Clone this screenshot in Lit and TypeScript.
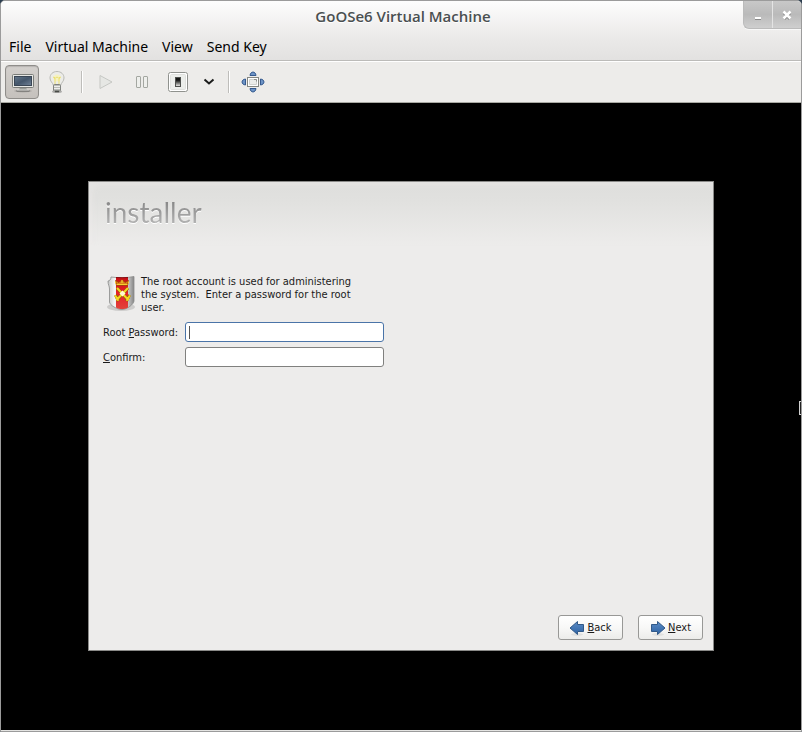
import { LitElement, html, css, svg } from "lit";
import { customElement } from "lit/decorators.js";

const monitorIcon = svg`
  <svg viewBox="0 0 26 22" width="26" height="22" aria-hidden="true">
    <defs>
      <linearGradient id="screen" x1="0" y1="0" x2="1" y2="1">
        <stop offset="0" stop-color="#64778b" /><stop offset=".5" stop-color="#44566b" /><stop offset="1" stop-color="#718397" />
      </linearGradient>
    </defs>
    <ellipse cx="13" cy="20" rx="9" ry="1.500" fill="#0002" />
    <path d="M10 16h6l1 3h-8z" fill="#999b97" />
    <path d="M6.500 20h13" stroke="#5b5d59" />
    <path d="M7 19h12" stroke="#d5d6d3" />
    <rect x="2.500" y="3.500" width="21" height="13" rx="1" fill="#e6e7e4" stroke="#7b7d79" />
    <rect x="4.500" y="5.500" width="17" height="9" fill="url(#screen)" stroke="#3a4655" />
  </svg>`;

const bulbIcon = svg`
  <svg viewBox="0 0 22 24" width="22" height="24" aria-hidden="true">
    <ellipse cx="11" cy="21.500" rx="5" ry="1.600" fill="#0004" />
    <path d="M11 1.500c-4.200 0-7 2.800-7 6.500 0 3.200 2.600 4.500 3.400 7.500h7.200c.8-3 3.400-4.300 3.400-7.500 0-3.700-2.800-6.500-7-6.500z" fill="#ecece8" stroke="#b9bab5" />
    <circle cx="11" cy="8" r="3.500" fill="#f9f4b5" opacity=".8" />
    <path d="M9 14V9l-1.500-2 2 1L11 7l1.500 1 2-1L13 9v5" fill="none" stroke="#eadf72" />
    <rect x="7.500" y="14.500" width="7" height="6.500" rx="1" fill="#babcb8" stroke="#81837f" />
    <path d="M8 16.500h6M8 18.500h6" stroke="#eeeeec" />
    <path d="M9 21.500h4" stroke="#484a46" stroke-width="1.500" />
  </svg>`;

const playIcon = svg`
  <svg viewBox="0 0 16 16" width="16" height="16" aria-hidden="true">
    <path d="M2 1.500L14 8 2 14.500z" fill="#e6e7e4" stroke="#c5c7c3" stroke-linejoin="round" />
  </svg>`;

const pauseIcon = svg`
  <svg viewBox="0 0 16 16" width="16" height="16" aria-hidden="true">
    <g fill="#eeefec" stroke="#a4a7a1">
      <rect x="2.500" y="2.500" width="4" height="11" rx=".5" />
      <rect x="9.500" y="2.500" width="4" height="11" rx=".5" />
    </g>
  </svg>`;

const powerIcon = svg`
  <svg viewBox="0 0 22 22" width="22" height="22" aria-hidden="true">
    <defs>
      <linearGradient id="rocker" x1="0" y1="0" x2="0" y2="1">
        <stop offset=".3" stop-color="#151615" /><stop offset=".5" stop-color="#4e504d" /><stop offset="1" stop-color="#f4f4f2" />
      </linearGradient>
    </defs>
    <rect x="1.500" y="1.500" width="19" height="19" rx="2" fill="#fff" stroke="#90928e" />
    <rect x="3.500" y="3.500" width="15" height="15" rx="1" fill="#eceeeb" stroke="#e0e1de" />
    <rect x="8.500" y="6.500" width="5" height="9" fill="url(#rocker)" stroke="#4e504d" />
  </svg>`;

const chevronIcon = svg`
  <svg viewBox="0 0 12 8" width="12" height="8" aria-hidden="true">
    <path d="M1.500 1.500L6 5.500l4.500-4" fill="none" stroke="#1c1d1c" stroke-width="2" />
  </svg>`;

const fullscreenIcon = svg`
  <svg viewBox="0 0 24 22" width="24" height="22" aria-hidden="true">
    <g fill="#6e94c6" stroke="#34598e">
      <path d="M9 4.500c.5-4.600 5.500-4.600 6 0z" />
      <path d="M9 17.500c.5 4.600 5.500 4.600 6 0z" />
      <path d="M4.500 8c-4.600.5-4.600 5.500 0 6z" />
      <path d="M19.500 8c4.600.5 4.600 5.500 0 6z" />
    </g>
    <rect x="6.500" y="6.500" width="11" height="9" fill="#fff" stroke="#858782" />
    <path d="M8.500 13.500v-5h7v5z" fill="#ecedea" stroke="#d2d3cf" />
    <path d="M13 8.500h2.500v2" fill="none" stroke="#8f918c" />
  </svg>`;

const shieldIcon = svg`
  <svg viewBox="0 0 36 44" width="36" height="44" aria-hidden="true">
    <defs>
      <linearGradient id="steel" x1="0" y1="0" x2="1" y2="0">
        <stop offset="0" stop-color="#c5c6c5" /><stop offset=".25" stop-color="#f4f4f4" />
        <stop offset=".75" stop-color="#d0d0d0" /><stop offset="1" stop-color="#858585" />
      </linearGradient>
      <linearGradient id="band" x1="0" y1="0" x2="0" y2="1">
        <stop offset="0" stop-color="#c80f16" /><stop offset=".5" stop-color="#e81f27" /><stop offset="1" stop-color="#e0433b" />
      </linearGradient>
    </defs>
    <ellipse cx="18" cy="35" rx="14" ry="4" fill="#0002" />
    <path d="M8 5c7 1 16 1 23-.5V29c0 3-7 8.500-12 8.500S6.500 33 6.500 30V17c0-3-1.500-4-1.500-8 1.500 0 3-1.500 3-4z" fill="url(#steel)" stroke="#8a8b8a" stroke-width=".8" />
    <path d="M13 5.500c4 .3 8 .3 12 0v30c-3.500 2-8.500 2-12 0z" fill="url(#band)" />
    <path d="M13 5.500c4 .3 8 .3 12 0" stroke="#860b0f" fill="none" />
    <g stroke="#8a6410" stroke-width="3" fill="none">
      <path d="M14 16l11 12M25 16L14 28M12.500 23l3 6M26.500 23l-3 6" />
    </g>
    <g stroke="#f6d61f" stroke-width="2" fill="none" stroke-linecap="round">
      <path d="M14.500 16.500l10.500 11M24.500 16.500L14 27.500M12.500 24l2.500 4M26.500 24L24 28" />
    </g>
    <path d="M19.500 18.500l3 3-3 3-3-3z" fill="#fffad0" />
    <path d="M12.500 8.500l1 5h11l1-5-3.500 2-3-3-3 3z" fill="#d9861a" stroke="#9e3a08" stroke-width=".8" />
    <path d="M13.500 12.500h11M19 8v3M12.500 9.500v2M25.500 9.500v2" stroke="#f7cf30" />
  </svg>`;

const arrowIcon = svg`
  <svg class="arrow" viewBox="0 0 16 16" width="16" height="16" aria-hidden="true">
    <defs>
      <linearGradient id="blue" x1="0" y1="0" x2="0" y2="1">
        <stop offset="0" stop-color="#5b8cc6" /><stop offset="1" stop-color="#2d62a3" />
      </linearGradient>
    </defs>
    <ellipse cx="8" cy="14.500" rx="6" ry="1.500" fill="#0001" />
    <path d="M1.500 4.500h6v-3L15 8l-7.500 6.500v-3h-6z" fill="url(#blue)" stroke="#315988" stroke-linejoin="round" />
  </svg>`;

@customElement("title-bar")
class TitleBar extends LitElement {
  static styles = css`
    :host {
      display: grid;
      grid-template-columns: 60px 1fr 60px;
      height: 33px;
    }
    h1 {
      grid-column: 2;
      margin: 0;
      padding-left: 4px;
      text-align: center;
      font-family: "Open Sans", "Noto Sans", sans-serif;
      font-size: 15px;
      line-height: 30px;
      font-weight: 600;
      color: #4a4f50;
      text-shadow: 0 1px #fff;
    }
    .controls {
      display: flex;
      height: 27px;
      width: 57px;
      justify-self: end;
      border: 1px solid #bbb;
      border-width: 0 0 1px 1px;
      border-bottom-left-radius: 6px;
      box-shadow: 0 1px #f8f8f8;
      overflow: hidden;
      background: linear-gradient(#c8c8c8, #bababa 50%, #cfcfcf);
    }
    button {
      flex: 1;
      border: 0;
      padding: 0;
      display: grid;
      place-items: center;
      background: none;
    }
    button + button {
      border-left: 1px solid #e4e4e4;
    }
  `;
  render() {
    return html`
      <h1>GoOSe6 Virtual Machine</h1>
      <div class="controls">
        <button aria-label="Minimize">
          <svg viewBox="0 0 12 12" width="12" height="12"><path d="M3 10h6" stroke="#888" stroke-width="2" /><path d="M3 9h6" stroke="#fff" stroke-width="2" /></svg>
        </button>
        <button aria-label="Close">
          <svg viewBox="0 0 12 12" width="12" height="12"><path d="M3 4l6 6M9 4l-6 6" stroke="#888" stroke-width="3" /><path d="M2.500 2.500l7 7M9.500 2.500l-7 7" stroke="#fff" stroke-width="2.500" /></svg>
        </button>
      </div>
    `;
  }
}

@customElement("menu-bar")
class MenuBar extends LitElement {
  static styles = css`
    nav {
      display: flex;
      gap: 14px;
      padding: 0 8px;
      height: 26px;
      border-bottom: 1px solid #bcbbb9;
    }
    button {
      border: 0;
      padding: 0;
      background: none;
      font: inherit;
      font-size: 14px;
      line-height: 26px;
      color: #000;
    }
  `;
  render() {
    return html`<nav>
      ${["File", "Virtual Machine", "View", "Send Key"].map((m) => html`<button>${m}</button>`)}
    </nav>`;
  }
}

@customElement("tool-bar")
class ToolBar extends LitElement {
  static styles = css`
    :host {
      display: flex;
      align-items: center;
      height: 41px;
      padding: 0 4px;
      background: #edecea;
      border-bottom: 1px solid #a9a9a3;
      box-shadow: inset 0 1px #fff;
    }
    button {
      display: grid;
      place-items: center;
      box-sizing: border-box;
      width: 36px;
      height: 34px;
      border: 0;
      padding: 0;
      background: none;
    }
    .active {
      width: 34px;
      padding-left: 2px;
      border: 1px solid #8f8d8a;
      border-radius: 4px;
      background: linear-gradient(#d3d0cd, #c5c1bd);
      box-shadow: inset 0 1px 1px #0002;
    }
    .menu {
      width: 26px;
    }
    .rule {
      width: 1px;
      height: 22px;
      margin: 0 6px;
      background: #bebdba;
      box-shadow: 1px 0 #fff;
    }
  `;
  render() {
    return html`
      <button class="active" aria-label="Console">${monitorIcon}</button>
      <button aria-label="Details">${bulbIcon}</button>
      <span class="rule"></span>
      <button aria-label="Run" disabled>${playIcon}</button>
      <button aria-label="Pause">${pauseIcon}</button>
      <button aria-label="Shut down">${powerIcon}</button>
      <button class="menu" aria-label="Shut down options">${chevronIcon}</button>
      <span class="rule"></span>
      <button aria-label="Fullscreen">${fullscreenIcon}</button>
    `;
  }
}

@customElement("installer-page")
class InstallerPage extends LitElement {
  static styles = css`
    :host {
      display: flex;
      flex-direction: column;
      box-sizing: border-box;
      border: 1px solid #8a8a88;
      background: #edeceb;
      font-family: "DejaVu Sans Condensed", "DejaVu Sans", sans-serif;
      font-stretch: condensed;
      font-size: 11px;
      color: #1a1a1a;
    }
    header {
      height: 64px;
      padding: 0 16px;
      background: linear-gradient(#dededc, #e1e1df 30%, #edeceb);
      box-shadow: inset 4px 4px 6px #edeceb66;
    }
    h2 {
      margin: 0;
      width: fit-content;
      font-family: Lato, sans-serif;
      font-stretch: normal;
      font-weight: 400;
      font-size: 28px;
      line-height: 60px;
      background: linear-gradient(#8a8a8a 35%, #b4b4b4 70%);
      background-clip: text;
      -webkit-background-clip: text;
      color: transparent;
      filter: drop-shadow(0 1px 0 #fff);
    }
    form {
      flex: 1;
      display: flex;
      flex-direction: column;
      padding: 26px 10px 10px 14px;
    }
    .intro {
      display: flex;
      gap: 2px;
      margin-bottom: 6px;
    }
    .intro p {
      margin: 3px 0 0;
      width: 240px;
      line-height: 13px;
      white-space: pre-line;
    }
    .fields {
      display: grid;
      grid-template-columns: 77px 199px;
      gap: 5px;
      align-items: center;
    }
    .fields label {
      white-space: nowrap;
    }
    .fields input {
      box-sizing: border-box;
      width: 100%;
      height: 20px;
      border: 1px solid #80807e;
      border-radius: 3px;
      padding: 0 4px;
      font: inherit;
      background: #fff;
      outline: 0;
    }
    .fields .current {
      border-color: #4a74a8;
      background: linear-gradient(#555, #555) 3px 3px / 1px 13px no-repeat #fff;
    }
    .actions {
      display: flex;
      justify-content: flex-end;
      gap: 15px;
      margin-top: auto;
    }
    .actions button {
      display: flex;
      align-items: center;
      justify-content: center;
      gap: 2px;
      box-sizing: border-box;
      width: 65px;
      height: 25px;
      padding: 0;
      border: 1px solid #989896;
      border-radius: 3px;
      background: linear-gradient(#fff, #f8f8f7 50%, #ececea);
      font: inherit;
      color: #1a1a1a;
    }
    .back .arrow {
      transform: scaleX(-1);
    }
  `;
  render() {
    return html`
      <header><h2>installer</h2></header>
      <form @submit=${(e: Event) => e.preventDefault()}>
        <div class="intro">
          ${shieldIcon}
          <p>The root account is used for administering
            the system.&nbsp; Enter a password for the root
            user.</p>
        </div>
        <div class="fields">
          <label for="password">Root <u>P</u>assword:</label>
          <input id="password" class="current" type="password" />
          <label for="confirm"><u>C</u>onfirm:</label>
          <input id="confirm" type="password" />
        </div>
        <div class="actions">
          <button class="back" type="button">${arrowIcon}<span><u>B</u>ack</span></button>
          <button type="submit">${arrowIcon}<span><u>N</u>ext</span></button>
        </div>
      </form>
    `;
  }
}

@customElement("app-root")
class AppRoot extends LitElement {
  static styles = css`
    :host {
      display: block;
      background: #2c3e50;
      font-family: "Noto Sans", "Open Sans", sans-serif;
    }
    .window {
      display: flex;
      flex-direction: column;
      box-sizing: border-box;
      min-height: 100vh;
      border: 1px solid #9b9b9b;
      border-radius: 5px 5px 0 0;
      overflow: hidden;
      background: #edecea;
    }
    .top {
      background: linear-gradient(#fdfdfd, #ebeae9 60%, #e2e1e0);
    }
    .screen {
      position: relative;
      flex: 1;
      display: flex;
      padding: 78px 87px 79px;
      background: #000;
      border-bottom: 1px solid #e4e4e2;
    }
    installer-page {
      flex: 1;
    }
    .pointer {
      position: absolute;
      right: 0;
      top: 298px;
      width: 1px;
      height: 12px;
      border: 1px solid #d0d0d0;
      border-right: 0;
      background: #222;
    }
  `;
  render() {
    return html`
      <div class="window">
        <div class="top">
          <title-bar></title-bar>
          <menu-bar></menu-bar>
        </div>
        <tool-bar></tool-bar>
        <main class="screen">
          <installer-page></installer-page>
          <span class="pointer"></span>
        </main>
      </div>
    `;
  }
}
